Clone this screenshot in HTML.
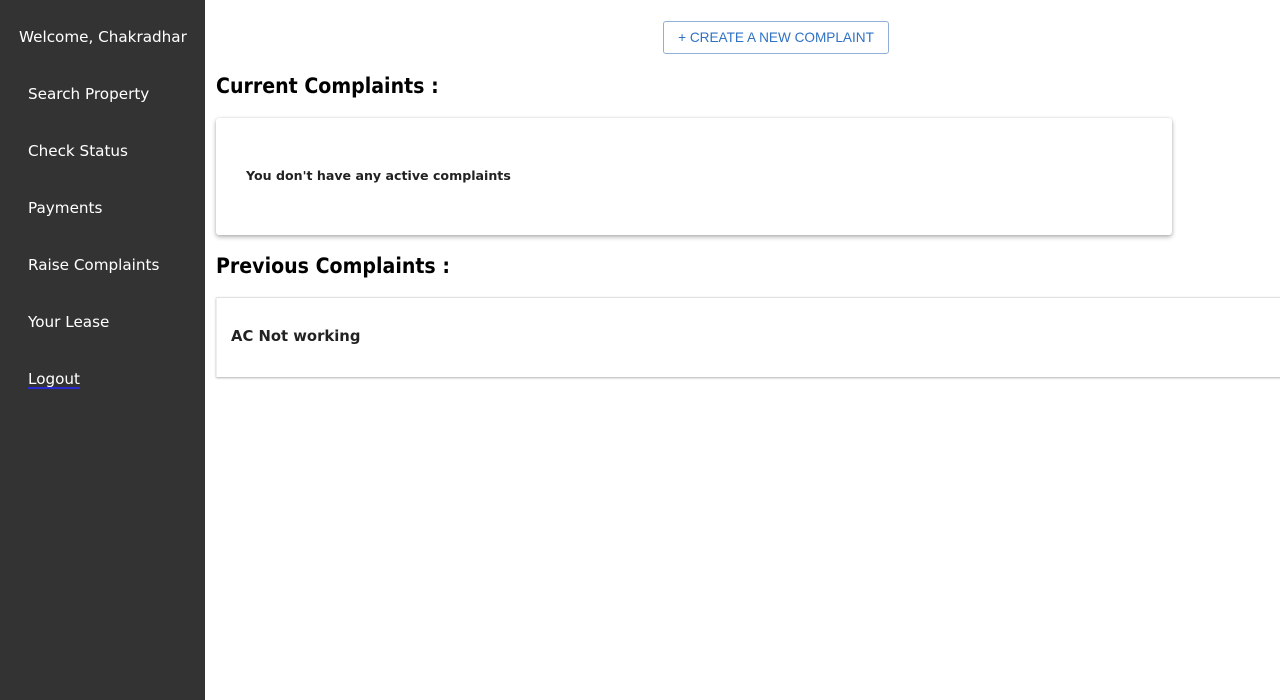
<!DOCTYPE html>
<html><head><meta charset="utf-8"><style>
*{box-sizing:border-box;margin:0;padding:0}
body{width:1280px;height:700px;overflow:hidden;background:#fff;font-family:"DejaVu Sans","Liberation Sans",sans-serif;position:relative}
.side{position:absolute;left:0;top:0;width:205px;height:700px;background:#333}
.side div{position:absolute;color:#fff;font-size:15.2px;white-space:nowrap}
.btn{position:absolute;left:663px;top:21px;width:226px;height:33px;border:1px solid #8fb0d8;border-radius:3px;color:#2f72c4;font-family:"Liberation Sans",sans-serif;font-size:13.6px;line-height:31px;text-align:center}
h2{position:absolute;font-size:19px;font-weight:bold;color:#000;white-space:nowrap;transform:scaleY(1.12);transform-origin:left top}
.card1{position:absolute;left:216px;top:118px;width:956px;height:117px;border-radius:3px;box-shadow:0 2px 5px rgba(0,0,0,.3),0 0 2px rgba(0,0,0,.1)}
.card2{position:absolute;left:216px;top:297px;width:1070px;height:80px;border-top:1px solid #e2e2e2;border-left:1px solid #eee;box-shadow:0 1px 2px rgba(0,0,0,.3)}
</style></head><body>
<div class="side">
<div style="left:19px;top:28px">Welcome, Chakradhar</div>
<div style="left:28px;top:85px">Search Property</div>
<div style="left:28px;top:142px">Check Status</div>
<div style="left:28px;top:199px">Payments</div>
<div style="left:28px;top:256px">Raise Complaints</div>
<div style="left:28px;top:313px">Your Lease</div>
<div style="left:28px;top:370px;text-decoration:underline;text-decoration-color:#2a2ad0;text-decoration-thickness:2px;text-underline-offset:3px">Logout</div>
</div>
<div class="btn">+ CREATE A NEW COMPLAINT</div>
<h2 style="left:216px;top:74px">Current Complaints :</h2>
<div class="card1"><div style="position:absolute;left:30px;top:50px;font-size:12.6px;font-weight:bold;color:#222;white-space:nowrap">You don't have any active complaints</div></div>
<h2 style="left:216px;top:254px">Previous Complaints :</h2>
<div class="card2"><div style="position:absolute;left:14px;top:30px;font-size:14.8px;font-weight:bold;color:#222">AC Not working</div></div>
</body></html>
